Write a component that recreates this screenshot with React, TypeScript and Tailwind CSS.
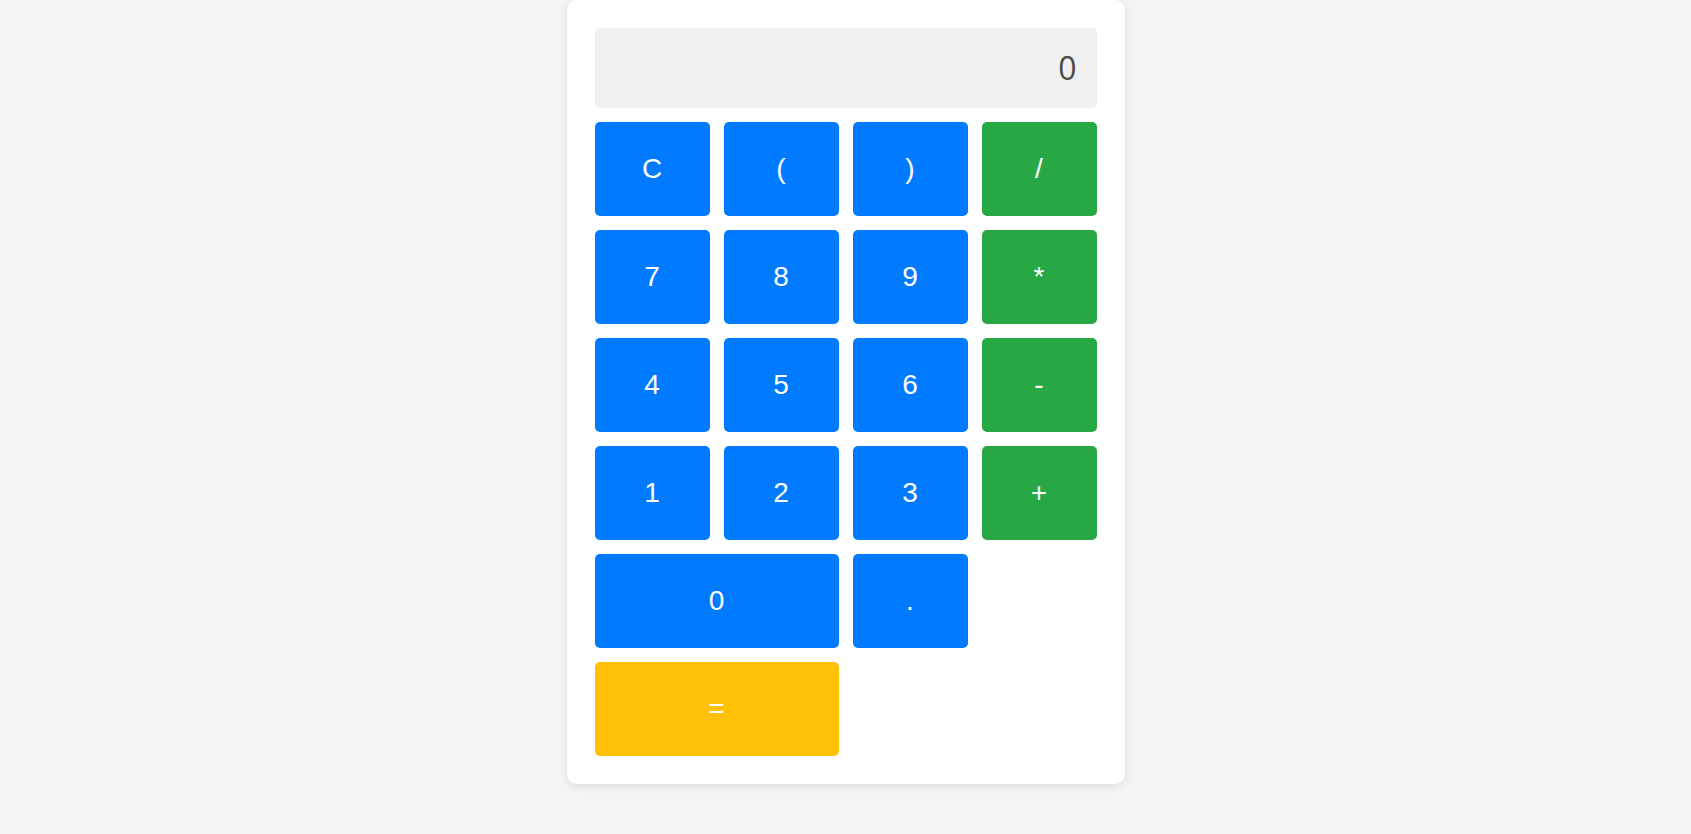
import React, { useState } from "react";

type Key = {
  label: string;
  kind: "num" | "op" | "eq";
  wide?: boolean;
};

const keys: Key[] = [
  { label: "C", kind: "num" },
  { label: "(", kind: "num" },
  { label: ")", kind: "num" },
  { label: "/", kind: "op" },
  { label: "7", kind: "num" },
  { label: "8", kind: "num" },
  { label: "9", kind: "num" },
  { label: "*", kind: "op" },
  { label: "4", kind: "num" },
  { label: "5", kind: "num" },
  { label: "6", kind: "num" },
  { label: "-", kind: "op" },
  { label: "1", kind: "num" },
  { label: "2", kind: "num" },
  { label: "3", kind: "num" },
  { label: "+", kind: "op" },
  { label: "0", kind: "num", wide: true },
  { label: ".", kind: "num" },
];

const colour = {
  num: "bg-[#007bff]",
  op: "bg-[#28a745]",
  eq: "bg-[#ffc107]",
};

function CalcButton({ item, onPress }: { item: Key; onPress: (k: string) => void }) {
  return (
    <button
      onClick={() => onPress(item.label)}
      className={`${colour[item.kind]} ${
        item.wide ? "col-span-2" : ""
      } h-[94px] rounded-[5px] text-white text-[28px] font-['Liberation_Sans',Arial,sans-serif] flex items-center justify-center`}
    >
      {item.label}
    </button>
  );
}

function App() {
  const [value, setValue] = useState("0");

  const press = (k: string) => {
    if (k === "C") return setValue("0");
    if (k === "=") {
      try {
        // eslint-disable-next-line no-new-func
        const out = Function(`return (${value})`)();
        setValue(String(out));
      } catch {
        setValue("Error");
      }
      return;
    }
    setValue((v) => (v === "0" || v === "Error" ? k : v + k));
  };

  return (
    <div className="min-h-screen w-full bg-[#f4f4f4] flex justify-center">
      <div className="w-[558px] h-[784px] bg-white rounded-[10px] shadow-[0_2px_10px_rgba(0,0,0,0.1)] p-[28px] flex flex-col gap-[14px]">
        <div className="h-[80px] bg-[#f0f0f0] rounded-[5px] flex items-center justify-end px-[20px] text-[32px] text-[#4a4a4a] font-['Open_Sans',sans-serif]">
          {value}
        </div>
        <div className="grid grid-cols-4 gap-[14px]">
          {keys.map((k, i) => (
            <CalcButton key={i} item={k} onPress={press} />
          ))}
          <div className="col-start-1 col-span-2">
            <button
              onClick={() => press("=")}
              className={`${colour.eq} w-full h-[94px] rounded-[5px] text-white text-[28px] font-['Liberation_Sans',Arial,sans-serif] flex items-center justify-center`}
            >
              =
            </button>
          </div>
        </div>
      </div>
    </div>
  );
}

export default App;
